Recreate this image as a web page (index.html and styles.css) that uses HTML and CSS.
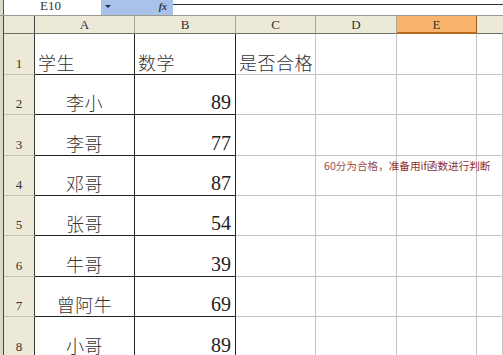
FILE: index.html
```html
<!DOCTYPE html>
<html lang="zh-CN">
<head>
<meta charset="utf-8">
<title>Excel</title>
<link rel="stylesheet" href="styles.css">
</head>
<body>
<div class="app">
  <div class="topbar">
    <div class="edge"></div>
    <div class="namebox">E10</div>
    <div class="bluebox">
      <span class="drop"></span>
      <span class="fx">fx</span>
    </div>
    <div class="formula"></div>
  </div>
  <div class="wrap">
    <div class="sheet">
      <div class="ch corner"></div>
      <div class="ch">A</div>
      <div class="ch">B</div>
      <div class="ch">C</div>
      <div class="ch">D</div>
      <div class="ch sel">E</div>
      <div class="ch last"></div>

      <div class="rh">1</div>
      <div class="c b left">学生</div>
      <div class="c b left">数学</div>
      <div class="c g left">是否合格</div>
      <div class="c g"></div>
      <div class="c g"></div>
      <div class="c g"></div>

      <div class="rh">2</div>
      <div class="c b name">李小</div>
      <div class="c b num">89</div>
      <div class="c g"></div>
      <div class="c g"></div>
      <div class="c g"></div>
      <div class="c g"></div>

      <div class="rh">3</div>
      <div class="c b name">李哥</div>
      <div class="c b num">77</div>
      <div class="c g"></div>
      <div class="c g"></div>
      <div class="c g"></div>
      <div class="c g"></div>

      <div class="rh">4</div>
      <div class="c b name">邓哥</div>
      <div class="c b num">87</div>
      <div class="c g note-host"><span class="note"><span class="n1">60分为合格，</span>准备用if函数进行判断</span></div>
      <div class="c g"></div>
      <div class="c g"></div>
      <div class="c g"></div>

      <div class="rh">5</div>
      <div class="c b name">张哥</div>
      <div class="c b num">54</div>
      <div class="c g"></div>
      <div class="c g"></div>
      <div class="c g"></div>
      <div class="c g"></div>

      <div class="rh">6</div>
      <div class="c b name">牛哥</div>
      <div class="c b num">39</div>
      <div class="c g"></div>
      <div class="c g"></div>
      <div class="c g"></div>
      <div class="c g"></div>

      <div class="rh">7</div>
      <div class="c b name">曾阿牛</div>
      <div class="c b num">69</div>
      <div class="c g"></div>
      <div class="c g"></div>
      <div class="c g"></div>
      <div class="c g"></div>

      <div class="rh">8</div>
      <div class="c b name">小哥</div>
      <div class="c b num">89</div>
      <div class="c g"></div>
      <div class="c g"></div>
      <div class="c g"></div>
      <div class="c g"></div>
    </div>
  </div>
</div>
</body>
</html>
```

FILE: styles.css
```css
* { box-sizing: border-box; }
html, body { margin: 0; padding: 0; background: #fff; overflow: hidden; }
body { width: 503px; height: 355px; font-family: "Liberation Serif", "Noto Sans CJK SC", serif; color: #222; }

.app { width: 503px; height: 355px; overflow: hidden; }

.topbar { display: flex; height: 16px; border-bottom: 1px solid #9c9a8e; }
.edge { width: 4px; background: #dcd9cc; border-right: 1px solid #555; }
.namebox { width: 97px; background: #fff; font-size: 13px; line-height: 12px; text-align: center; padding-right: 4px; color: #333; overflow: hidden; }
.bluebox { width: 72px; background: #a9c2ea; display: flex; align-items: center; justify-content: space-between; padding: 0 6px 2px 4px; }
.drop { width: 0; height: 0; border-left: 3px solid transparent; border-right: 3px solid transparent; border-top: 3px solid #1c2a44; }
.fx { font-style: italic; font-size: 10px; font-weight: bold; color: #333; line-height: 10px; }
.formula { flex: 1; margin-top: 4px; border-top: 1px solid #333; }

.wrap { padding-left: 3px; background: #dcd9cc; height: 339px; }
.sheet {
  display: grid;
  grid-template-columns: 31px 100px 101px 80px 81px 80px 1fr;
  grid-template-rows: 18px 41px 40px 41px 40px 40px 41px 40px 41px;
  border-left: 1px solid #444;
  background: #fff;
}

.ch {
  background: #ece9d8;
  border-right: 1px solid #aca899;
  border-bottom: 1px solid #6e6c62;
  font-size: 13px;
  line-height: 17px;
  text-align: center;
  color: #333;
}
.ch.corner { border-right: 1px solid #444; }
.ch.sel { background: #f8b46a; border-bottom: 2px solid #b96a22; border-right: 1px solid #9a5a20; }
.ch.last { border-right: none; }

.rh {
  background: #ece9d8;
  border-right: 1px solid #3a3a3a;
  border-bottom: 1px solid #c6c3b4;
  font-size: 13px;
  text-align: center;
  display: flex;
  align-items: flex-end;
  justify-content: center;
  padding-bottom: 2px;
  color: #333;
}

.c { display: flex; align-items: flex-end; padding-bottom: 1px; white-space: nowrap; }
.b { border-right: 1px solid #222; border-bottom: 1px solid #222; }
.g { border-right: 1px solid #c4c4c4; border-bottom: 1px solid #c4c4c4; }

.left { font-family: "Noto Sans CJK SC", sans-serif; font-size: 18px; font-weight: 300; line-height: 22px; padding-left: 3px; color: #333; letter-spacing: 0.5px; }
.name { font-family: "Noto Sans CJK SC", sans-serif; font-size: 18px; font-weight: 300; line-height: 22px; justify-content: center; color: #333; letter-spacing: 0.5px; }
.num { justify-content: flex-end; font-size: 20px; line-height: 22px; padding-right: 4px; color: #222; }

.note-host { position: relative; }
.note {
  position: absolute;
  left: 88px;
  top: 3px;
  font-family: "Noto Sans CJK SC", sans-serif;
  font-size: 10.6px;
  line-height: 14px;
  color: #8e2e30;
  white-space: nowrap;
}
.n1 { color: #9a4c50; }
```
